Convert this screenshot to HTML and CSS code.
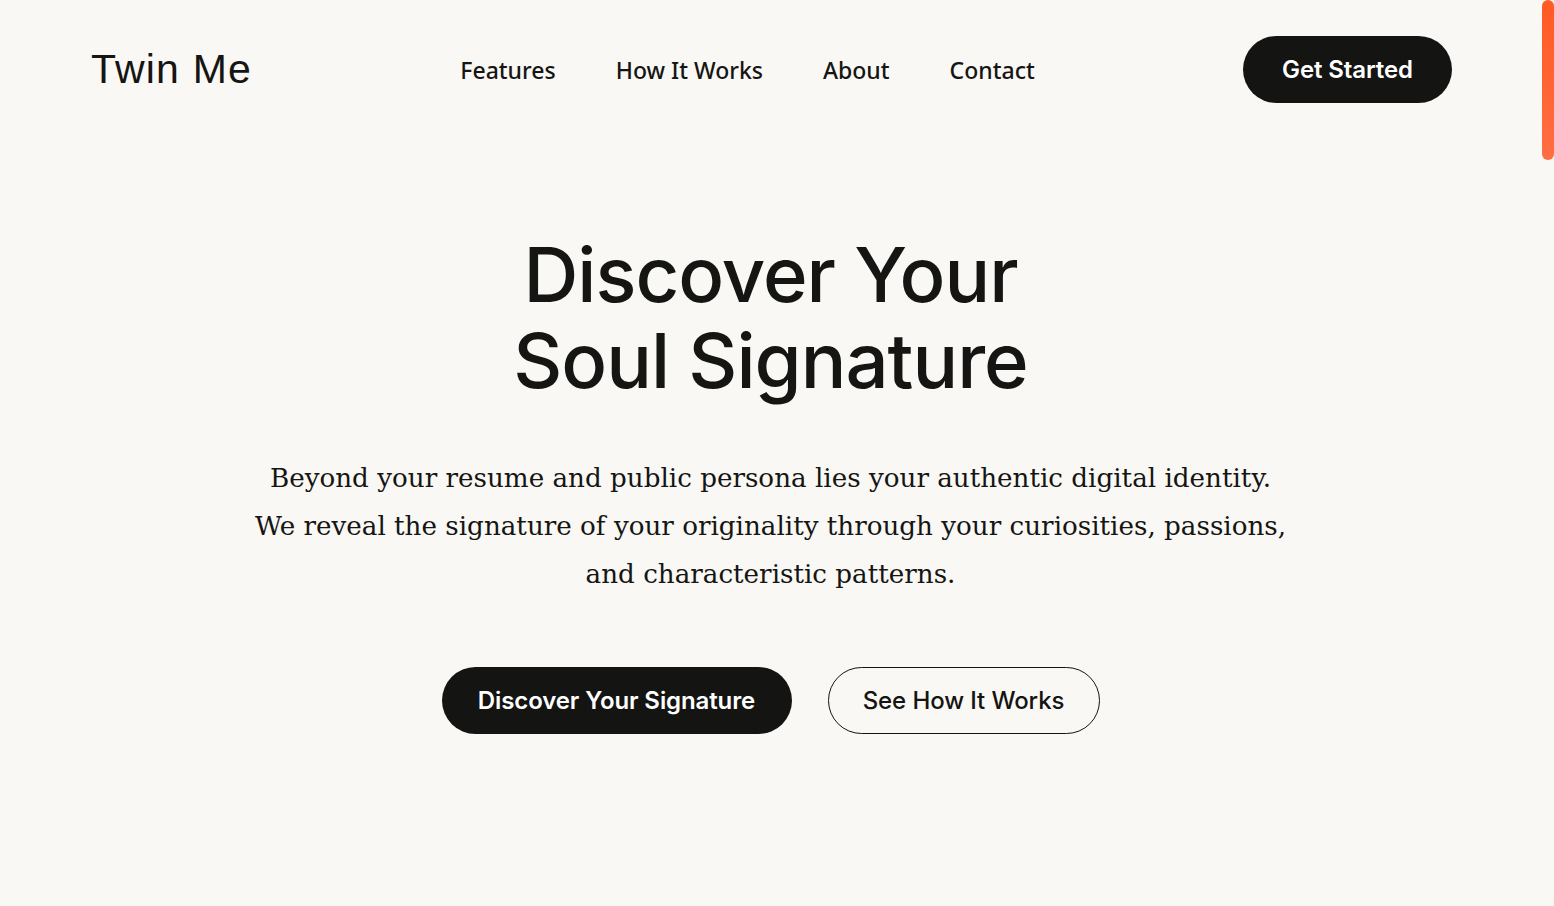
FILE: index.html
```html
<!DOCTYPE html>
<html lang="en">
<head>
<meta charset="utf-8">
<title>Twin Me</title>
<link rel="stylesheet" href="styles.css">
</head>
<body>
<div class="page">
  <header class="header">
    <a class="logo" href="#">Twin Me</a>
    <nav class="nav">
      <a href="#">Features</a>
      <a href="#">How It Works</a>
      <a href="#">About</a>
      <a href="#">Contact</a>
    </nav>
    <a class="btn btn-dark btn-nav" href="#">Get Started</a>
  </header>
  <main class="hero">
    <h1 class="hero-title">Discover Your<br>Soul Signature</h1>
    <p class="hero-text">Beyond your resume and public persona lies your authentic digital identity.<br>We reveal the signature of your originality through your curiosities, passions,<br>and characteristic patterns.</p>
    <div class="hero-actions">
      <a class="btn btn-dark" href="#">Discover Your Signature</a>
      <a class="btn btn-outline" href="#">See How It Works</a>
    </div>
  </main>
</div>
<div class="scroll-thumb"></div>
</body>
</html>
```
FILE: styles.css
```css
* { box-sizing: border-box; }
html, body { margin: 0; padding: 0; }
body {
  background: #f9f8f5;
  color: #151513;
  font-family: "Inter", "Liberation Sans", sans-serif;
  height: 906px;
  overflow: hidden;
}
a { color: inherit; text-decoration: none; }

.page {
  margin-right: 13px;
}

.header {
  display: flex;
  align-items: center;
  justify-content: space-between;
  padding: 36px 89px 0 91px;
}
.logo {
  font-family: "Liberation Sans", Arial, sans-serif;
  font-size: 41px;
  letter-spacing: 1.2px;
  line-height: 67px;
}
.nav {
  display: flex;
  gap: 60px;
}
.nav a {
  font-family: "Noto Sans", "Open Sans", sans-serif;
  font-size: 23px;
  font-weight: 500;
}

.btn {
  display: inline-flex;
  align-items: center;
  justify-content: center;
  height: 67px;
  border-radius: 34px;
  font-family: "Inter", sans-serif;
  font-weight: 600;
  font-size: 24px;
  letter-spacing: -0.1px;
  padding: 0 37px;
}
.btn-dark {
  background: #141412;
  color: #ffffff;
}
.btn-outline {
  border: 1px solid #141412;
  color: #141412;
  font-weight: 500;
}
.btn-nav {
  width: 209px;
  padding: 0;
}

.hero {
  display: flex;
  flex-direction: column;
  align-items: center;
  text-align: center;
  padding-top: 128px;
}
.hero-title {
  margin: 0;
  font-weight: 500;
  font-size: 76px;
  line-height: 86px;
  letter-spacing: -1px;
}
.hero-text {
  margin: 51px 0 0;
  font-family: "DejaVu Serif", "Liberation Serif", serif;
  font-size: 26.2px;
  line-height: 48px;
}
.hero-actions {
  display: flex;
  gap: 36px;
  margin-top: 69px;
}
.hero-actions .btn-dark { width: 350px; padding: 0; }
.hero-actions .btn-outline { width: 272px; padding: 0; }

.scroll-thumb {
  position: fixed;
  top: 0;
  right: 0;
  width: 12px;
  height: 160px;
  border-radius: 6px;
  background: linear-gradient(#ff5a24, #ff6e42);
}
```
